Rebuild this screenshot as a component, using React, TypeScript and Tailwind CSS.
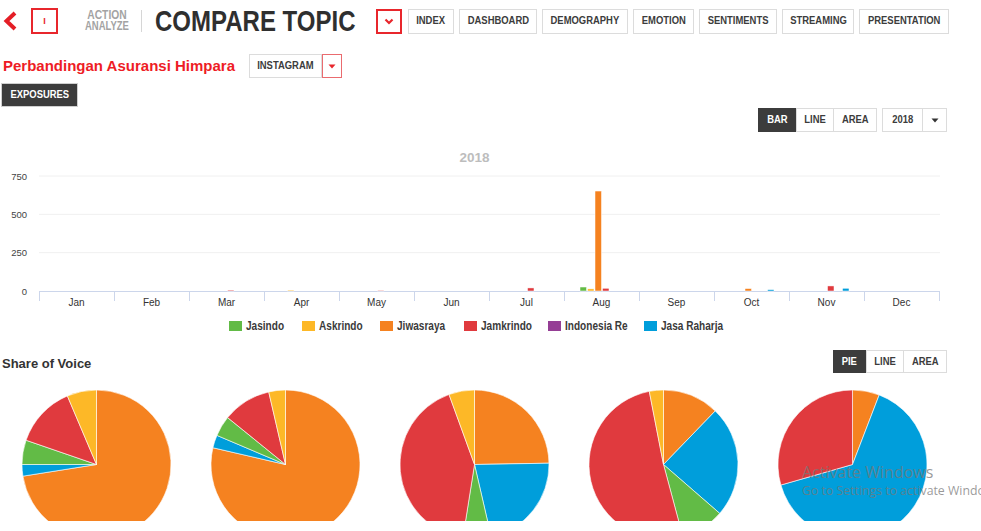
import React from 'react';

const C = {
  green: '#62bb46',
  yellow: '#fdb827',
  orange: '#f58220',
  red: '#e03a3e',
  purple: '#953e95',
  blue: '#009edb',
};

const NAV = [
  { label: 'INDEX', w: 'w-[46px]' },
  { label: 'DASHBOARD', w: 'w-[78px]' },
  { label: 'DEMOGRAPHY', w: 'w-[86px]' },
  { label: 'EMOTION', w: 'w-[61px]' },
  { label: 'SENTIMENTS', w: 'w-[78px]' },
  { label: 'STREAMING', w: 'w-[72px]' },
  { label: 'PRESENTATION', w: 'w-[90px]' },
];

const MONTHS = ['Jan', 'Feb', 'Mar', 'Apr', 'May', 'Jun', 'Jul', 'Aug', 'Sep', 'Oct', 'Nov', 'Dec'];
const SERIES = [
  { name: 'Jasindo', color: C.green },
  { name: 'Askrindo', color: C.yellow },
  { name: 'Jiwasraya', color: C.orange },
  { name: 'Jamkrindo', color: C.red },
  { name: 'Indonesia Re', color: C.purple },
  { name: 'Jasa Raharja', color: C.blue },
];
// values per month: [jasindo, askrindo, jiwasraya, jamkrindo, indonesia re, jasa raharja]
const DATA: number[][] = [
  [0, 0, 0, 0, 0, 0],
  [0, 0, 0, 0, 0, 0],
  [0, 0, 0, 6, 0, 0],
  [0, 6, 0, 0, 0, 0],
  [0, 0, 0, 5, 0, 0],
  [0, 0, 0, 0, 0, 0],
  [0, 0, 0, 20, 0, 0],
  [26, 14, 652, 18, 0, 0],
  [0, 0, 0, 0, 0, 0],
  [0, 0, 16, 0, 0, 9],
  [0, 0, 0, 33, 0, 18],
  [0, 0, 0, 0, 0, 0],
];

const LEGEND_X = [229, 302, 380, 464, 548, 644];

const PIES: [string, number, number][][] = [
  [[C.orange, 0, 261], [C.blue, 261, 270], [C.green, 270, 289], [C.red, 289, 337], [C.yellow, 337, 360]],
  [[C.orange, 0, 283], [C.blue, 283, 293], [C.green, 293, 309], [C.red, 309, 347], [C.yellow, 347, 360]],
  [[C.orange, 0, 89], [C.blue, 89, 167], [C.green, 167, 189], [C.red, 189, 340], [C.yellow, 340, 360]],
  [[C.orange, 0, 44], [C.blue, 44, 131], [C.green, 131, 165], [C.red, 165, 349], [C.yellow, 349, 360]],
  [[C.orange, 0, 21], [C.blue, 21, 254], [C.red, 254, 360]],
];

function slicePath(cx: number, cy: number, r: number, a0: number, a1: number) {
  const pt = (a: number) => [cx + r * Math.sin((a * Math.PI) / 180), cy - r * Math.cos((a * Math.PI) / 180)];
  const [x0, y0] = pt(a0);
  const [x1, y1] = pt(a1 === 360 ? 359.99 : a1);
  const large = a1 - a0 > 180 ? 1 : 0;
  return `M ${cx} ${cy} L ${x0} ${y0} A ${r} ${r} 0 ${large} 1 ${x1} ${y1} Z`;
}

// narrow bold label (the page uses a condensed face)
function N({ children }: { children: React.ReactNode }) {
  return <span className="inline-block scale-x-[0.82] whitespace-nowrap">{children}</span>;
}

function Triangle({ color = '#333' }: { color?: string }) {
  return (
    <svg width="8" height="5" viewBox="0 0 8 5">
      <path d="M0.5 0.5 L7.5 0.5 L4 4.5 Z" fill={color} />
    </svg>
  );
}

function BarChart() {
  const top = 132;
  const y0 = 291 - top;
  const k = 115 / 750;
  const left = 39;
  const band = 75;
  return (
    <svg width="981" height="208" viewBox="0 0 981 208" fontFamily="'Liberation Sans', Arial, sans-serif">
      <text x="474.5" y={162 - top} textAnchor="middle" fontSize="13.5" fontWeight="bold" fill="#bdbdbd">
        2018
      </text>
      {[750, 500, 250, 0].map((v) => {
        const y = y0 - v * k;
        return (
          <g key={v}>
            {v > 0 && <line x1={left} x2="940" y1={y} y2={y} stroke="#f0f0f0" strokeWidth="1" />}
            <text x="27" y={y + 3.5} textAnchor="end" fontSize="9.5" fill="#444">
              {v}
            </text>
          </g>
        );
      })}
      <line x1={left} x2="940" y1={y0 + 0.5} y2={y0 + 0.5} stroke="#ccd6eb" strokeWidth="1" />
      {Array.from({ length: 13 }).map((_, i) => (
        <line key={i} x1={left + i * band + 0.5} x2={left + i * band + 0.5} y1={y0} y2={y0 + 10} stroke="#ccd6eb" />
      ))}
      {MONTHS.map((m, i) => (
        <text key={m} x={left + i * band + band / 2} y={306 - top} textAnchor="middle" fontSize="10" fill="#333">
          {m}
        </text>
      ))}
      {DATA.map((row, i) =>
        row.map((v, j) => {
          if (!v) return null;
          const h = v * k;
          return (
            <rect
              key={`${i}-${j}`}
              x={left + i * band + 16 + j * 7.5}
              y={y0 - h}
              width="6.5"
              height={h}
              fill={SERIES[j].color}
              stroke="#fff"
              strokeWidth="0.5"
            />
          );
        })
      )}
      {SERIES.map((s, i) => (
        <g key={s.name}>
          <rect x={LEGEND_X[i]} y={321 - top} width="13" height="10" fill={s.color} />
          <text
            transform={`translate(${LEGEND_X[i] + 17} ${330 - top}) scale(0.84 1)`}
            fontSize="12"
            fontWeight="bold"
            fill="#3a3a3a"
          >
            {s.name}
          </text>
        </g>
      ))}
    </svg>
  );
}

function Pie({ slices }: { slices: [string, number, number][] }) {
  const r = 74.5;
  return (
    <svg width="149" height="149" viewBox="0 0 149 149" className="shrink-0">
      {slices.map(([color, a0, a1], i) => (
        <path key={i} d={slicePath(74.5, 74.5, r, a0, a1)} fill={color} stroke="#fff" strokeWidth="0.6" strokeLinejoin="round" />
      ))}
    </svg>
  );
}

export default function App() {
  return (
    <div className="relative w-[981px] h-[531px] overflow-hidden bg-white font-['Liberation_Sans',Arial,sans-serif]">
      {/* Header */}
      <div className="flex items-center h-[26px] mt-[8px]">
        <svg className="ml-[3px]" width="14" height="20" viewBox="0 0 14 20">
          <path d="M12 2 L3.5 10 L12 18" fill="none" stroke="#e41e26" strokeWidth="4" strokeLinejoin="miter" />
        </svg>
        <div className="ml-[14px] w-[27px] h-[26px] border-2 border-[#e8262c] flex items-center justify-center">
          <span className="text-[9px] font-bold text-[#e8262c] leading-none">I</span>
        </div>
        <div className="ml-[27px] w-[44px] flex flex-col items-center text-[12.5px] leading-[11px] font-bold text-[#a3a3a3]">
          <N>ACTION</N>
          <span className="inline-block scale-x-[0.76] whitespace-nowrap">ANALYZE</span>
        </div>
        <div className="ml-[12px] w-px h-[22px] bg-[#d6d6d6]" />
        <div className="ml-[13px] w-[207px] whitespace-nowrap text-[30px] leading-none font-bold text-[#2f2f2f]">
          <span className="inline-block origin-left scale-x-[0.8]">COMPARE TOPIC</span>
        </div>
        <div className="ml-[14px] w-[26px] h-[25px] border-2 border-[#e8262c] flex items-center justify-center">
          <svg width="10" height="7" viewBox="0 0 10 7">
            <path d="M1.5 1.5 L5 5 L8.5 1.5" fill="none" stroke="#e8262c" strokeWidth="2.2" />
          </svg>
        </div>
        <div className="ml-[6px] flex gap-[5px]">
          {NAV.map((n) => (
            <div
              key={n.label}
              className={`${n.w} h-[25px] border border-[#dcdcdc] flex items-center justify-center text-[11.5px] font-bold text-[#3c3c3c]`}
            >
              <N>{n.label}</N>
            </div>
          ))}
        </div>
      </div>

      {/* Title row */}
      <div className="flex items-center h-[24px] mt-[20px]">
        <div className="ml-[3px] w-[236px] text-[15px] font-bold text-[#ee1c25] whitespace-nowrap">Perbandingan Asuransi Himpara</div>
        <div className="ml-[10px] flex h-[24px]">
          <div className="w-[73px] border border-[#dcdcdc] flex items-center justify-center text-[11.5px] font-bold text-[#3c3c3c]">
            <N>INSTAGRAM</N>
          </div>
          <div className="w-[20px] border border-[#ea6b6f] flex items-center justify-center">
            <Triangle color="#e8262c" />
          </div>
        </div>
      </div>

      {/* Exposures */}
      <div className="mt-[5px] ml-[1px]">
        <div className="w-[77px] h-[24px] bg-[#3c3c3c] border border-[#cfcfcf] flex items-center justify-center text-[11.5px] font-bold text-white">
          <N>EXPOSURES</N>
        </div>
      </div>

      {/* Chart type row */}
      <div className="flex justify-end pr-[34px] mt-[1px] h-[24px] gap-[5px]">
        <div className="flex text-[11.5px] font-bold">
          <div className="w-[38px] bg-[#3c3c3c] text-white flex items-center justify-center"><N>BAR</N></div>
          <div className="w-[38px] border border-[#dcdcdc] text-[#3c3c3c] flex items-center justify-center"><N>LINE</N></div>
          <div className="w-[43px] border border-l-0 border-[#dcdcdc] text-[#3c3c3c] flex items-center justify-center"><N>AREA</N></div>
        </div>
        <div className="flex text-[11.5px] font-bold">
          <div className="w-[41px] border border-[#dcdcdc] text-[#3c3c3c] flex items-center justify-center"><N>2018</N></div>
          <div className="w-[24px] border border-l-0 border-[#dcdcdc] flex items-center justify-center">
            <Triangle />
          </div>
        </div>
      </div>

      <BarChart />

      {/* Share of Voice */}
      <div className="flex items-center justify-between mt-[10px] h-[23px] pl-[2px] pr-[34px]">
        <div className="text-[13px] font-bold text-[#333] pt-[4px]">Share of Voice</div>
        <div className="flex h-[23px] text-[11.5px] font-bold">
          <div className="w-[33px] bg-[#3c3c3c] text-white flex items-center justify-center"><N>PIE</N></div>
          <div className="w-[38px] border border-[#dcdcdc] text-[#3c3c3c] flex items-center justify-center"><N>LINE</N></div>
          <div className="w-[43px] border border-l-0 border-[#dcdcdc] text-[#3c3c3c] flex items-center justify-center"><N>AREA</N></div>
        </div>
      </div>

      <div className="mt-[17px] h-[131px] overflow-hidden flex gap-[40px] pl-[22px]">
        {PIES.map((p, i) => (
          <Pie key={i} slices={p} />
        ))}
      </div>

      {/* Windows watermark */}
      <div className="absolute left-[802px] top-[461px] font-['Open_Sans','Noto_Sans',sans-serif] text-[rgba(120,120,120,0.75)] whitespace-nowrap pointer-events-none">
        <div className="text-[16px] leading-[22px]">Activate Windows</div>
        <div className="text-[12.3px] leading-[16px]">Go to Settings to activate Windows.</div>
      </div>
    </div>
  );
}
